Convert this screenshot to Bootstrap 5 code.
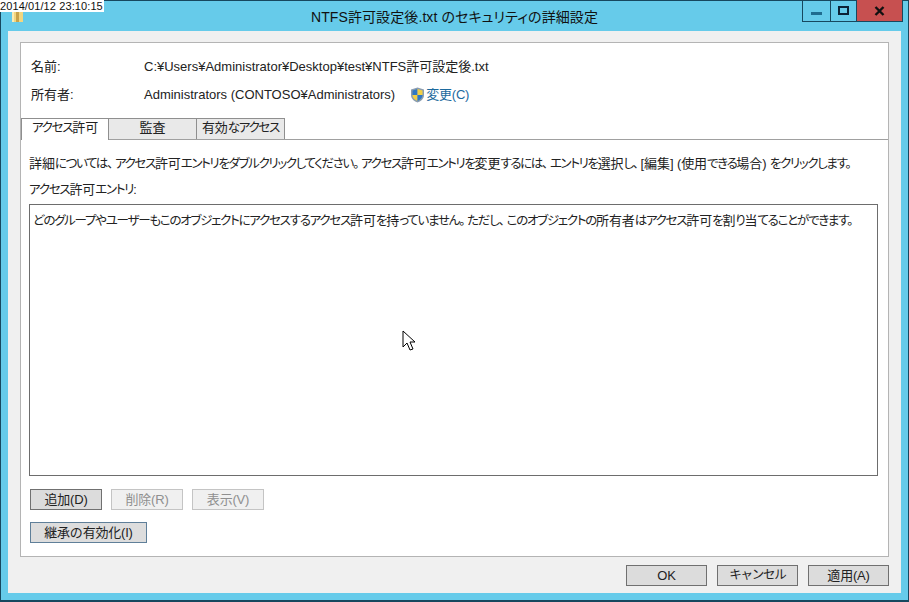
<!DOCTYPE html>
<html lang="ja">
<head>
<meta charset="utf-8">
<title>NTFS</title>
<link href="https://cdn.jsdelivr.net/npm/bootstrap@5.3.0/dist/css/bootstrap.min.css" rel="stylesheet">
<style>
html,body{margin:0;padding:0;background:#66cbea;}
body{width:909px;height:602px;overflow:hidden;font-family:"Liberation Sans","Noto Sans CJK JP",sans-serif;font-size:13px;line-height:16px;color:#222;font-feature-settings:"palt";}
.win-frame{position:relative;width:909px;height:602px;background:#66cbea;border:1px solid #17485f;border-bottom-width:2px;padding:0 7px 7px 7px;}
.stamp{position:absolute;left:-1px;top:-1px;width:104px;height:12px;background:#fff;color:#111;font:11px/12px "Liberation Sans",sans-serif;letter-spacing:.1px;white-space:nowrap;z-index:3;}
.folder-ico{position:absolute;left:10px;top:10px;width:13px;height:11px;}
.title-row{height:30px;flex:none;font-size:14px;line-height:32px;text-align:center;color:#111;letter-spacing:.1px;}
.cap-btns{position:absolute;right:5px;top:-1px;height:22px;border:1px solid #17485f;border-top:0;}
.cap-b{height:21px;align-items:center;justify-content:center;border-right:1px solid #17485f;}
.cap-b:last-child{border-right:0;}
.cap-min{width:28px;}
.cap-min svg{margin-top:5px;}
.cap-max{width:26px;}
.cap-x{width:45px;background:#c75050;color:#111;}
.client{flex:1;background:#f0f0f0;padding:11px 12px 0 12px;min-height:0;}
.pane{height:515px;flex:none;background:#fff;border:1px solid #b4b4b4;padding:0;}
.info-top{padding:16px 10px 0 10px;height:75px;flex:none;}
.info-row{height:28px;}
.info-k{width:113px;flex:none;}
.chg{color:#1c6a9e;margin-left:15px;gap:1px;}
.chg span{letter-spacing:-.2px;}
.tabs-row{height:22px;flex:none;border-bottom:1px solid #a0a0a0;padding-left:0;position:relative;}
.tabx{height:21px;line-height:18px;text-align:center;background:#e9e9e9;border:1px solid #8f8f8f;border-bottom:0;margin-right:-1px;}
.tabx.on{background:#fff;border-color:#8f8f8f;height:22px;z-index:1;border-bottom:0;margin-top:0;}
.tw1{width:88px;}
.tw2{width:89px;}
.tw3{width:89px;}
.tab-body{padding:16px 10px 0 8px;flex:1;min-height:0;}
.desc{height:26px;white-space:nowrap;}
.lbl{height:16px;}
.entry-box{height:272px;flex:none;border:1px solid #6d6d6d;margin-top:6px;padding:8px 3px;white-space:nowrap;background:#fff;}
.cursor-ico{position:absolute;left:401px;top:329px;width:14px;height:22px;}
.btn-row{gap:9px;margin-top:13px;padding-left:1px;}
.btn-row.next{margin-top:12px;}
.winbtn{width:72px;height:21px;padding:0;font-size:13px;line-height:19px;letter-spacing:-.2px;border-radius:0;background:#dcdcdc;border:1px solid #707070;color:#222;box-sizing:border-box;}
.winbtn:disabled{background:#f0f0f0;border-color:#c4c4c4;color:#8f8f8f;opacity:1;}
.winbtn.hot{width:117px;background:#dddddd;border-color:#5f7f99;}
.foot{height:36px;flex:none;justify-content:flex-end;gap:10px;padding:8px 0 0 0;}
.winbtn.big{width:81px;}
.tight{font-size:12.5px;letter-spacing:-1.25px;}
.desc.tight{letter-spacing:-1.35px;}
.kj{font-size:13px;letter-spacing:-.1px;}
.pu{margin-right:3px;}
</style>
</head>
<body>
<div class="win-frame d-flex flex-column">
  <div class="stamp">2014/01/12 23:10:15</div>
  <svg class="folder-ico" viewBox="0 0 13 11"><rect x="1" y="0" width="11" height="11" fill="#f3d680"/><rect x="5" y="0" width="3" height="11" fill="#c9a24a"/><rect x="1" y="0" width="2" height="11" fill="#fbecb4"/></svg>
  <div class="title-row">NTFS許可設定後.txt のセキュリティの詳細設定</div>
  <div class="cap-btns d-flex">
    <div class="cap-b cap-min d-flex"><svg width="11" height="3" viewBox="0 0 11 3"><rect width="11" height="3" fill="#1f6c8f"/></svg></div>
    <div class="cap-b cap-max d-flex"><svg width="11" height="9" viewBox="0 0 11 9"><rect x="1" y="1" width="9" height="7" fill="none" stroke="#0c2236" stroke-width="2"/></svg></div>
    <div class="cap-b cap-x d-flex"><svg width="11" height="10" viewBox="0 0 11 10"><path d="M1.5 1 L9.5 9 M9.5 1 L1.5 9" stroke="#111" stroke-width="2.4" fill="none"/></svg></div>
  </div>
  <div class="client d-flex flex-column">
    <div class="pane d-flex flex-column">
      <div class="info-top">
        <div class="info-row d-flex"><div class="info-k">名前:</div><div>C:¥Users¥Administrator¥Desktop¥test¥NTFS許可設定後.txt</div></div>
        <div class="info-row d-flex align-items-start"><div class="info-k">所有者:</div><div>Administrators (CONTOSO¥Administrators)</div>
          <div class="chg d-inline-flex align-items-center">
            <svg width="15" height="16" viewBox="0 0 15 16"><path d="M7.5 .5 L14 2.5 V8 C14 12 10.5 14.5 7.5 15.5 C4.5 14.5 1 12 1 8 V2.5 Z" fill="#8a9cb0"/><path d="M7.5 2 V8 H2.5 V3.4 Z" fill="#2f78c4"/><path d="M7.5 2 L12.5 3.4 V8 H7.5 Z" fill="#f2cf45"/><path d="M2.5 8 H7.5 V14 C5 13 2.5 11 2.5 8 Z" fill="#f2cf45"/><path d="M7.5 8 H12.5 C12.5 11 10 13 7.5 14 Z" fill="#2f78c4"/></svg>
            <span>変更(C)</span>
          </div>
        </div>
      </div>
      <div class="tabs-row d-flex">
        <div class="tabx on tw1 tight"><span>アクセス</span><span class="kj">許可</span></div>
        <div class="tabx tw2">監査</div>
        <div class="tabx tw3 tight"><span class="kj">有効</span>なアクセス</div>
      </div>
      <div class="tab-body d-flex flex-column">
        <div class="desc tight"><span class="kj">詳細</span>については<span class="pu">、</span>アクセス<span class="kj">許可</span>エントリをダブルクリックしてください<span class="pu">。</span>アクセス<span class="kj">許可</span>エントリを<span class="kj">変更</span>するには<span class="pu">、</span>エントリを<span class="kj">選択</span>し<span class="pu">、</span><span class="kj">[編集] (使用</span>できる<span class="kj">場合) </span>をクリックします<span class="pu">。</span></div>
        <div class="lbl tight">アクセス<span class="kj">許可</span>エントリ:</div>
        <div class="entry-box tight">どのグループやユーザーもこのオブジェクトにアクセスするアクセス<span class="kj">許可</span>を<span class="kj">持</span>っていません<span class="pu">。</span>ただし<span class="pu">、</span>このオブジェクトの<span class="kj">所有者</span>はアクセス<span class="kj">許可</span>を<span class="kj">割</span>り<span class="kj">当</span>てることができます<span class="pu">。</span></div>
        <div class="btn-row d-flex">
          <button type="button" class="btn winbtn">追加(D)</button>
          <button type="button" class="btn winbtn" disabled>削除(R)</button>
          <button type="button" class="btn winbtn" disabled>表示(V)</button>
        </div>
        <div class="btn-row next d-flex"><button type="button" class="btn winbtn hot">継承の有効化(I)</button></div>
      </div>
    </div>
    <div class="foot d-flex">
      <button type="button" class="btn winbtn big">OK</button>
      <button type="button" class="btn winbtn big tight">キャンセル</button>
      <button type="button" class="btn winbtn big">適用(A)</button>
    </div>
  </div>
  <svg class="cursor-ico" viewBox="0 0 14 22"><path d="M1 1 V17 L5 13 L8 20 L11 19 L8 12 H13 Z" fill="#fff" stroke="#000" stroke-width="1"/></svg>
</div>
<script src="https://cdn.jsdelivr.net/npm/bootstrap@5.3.0/dist/js/bootstrap.bundle.min.js"></script>
</body>
</html>
